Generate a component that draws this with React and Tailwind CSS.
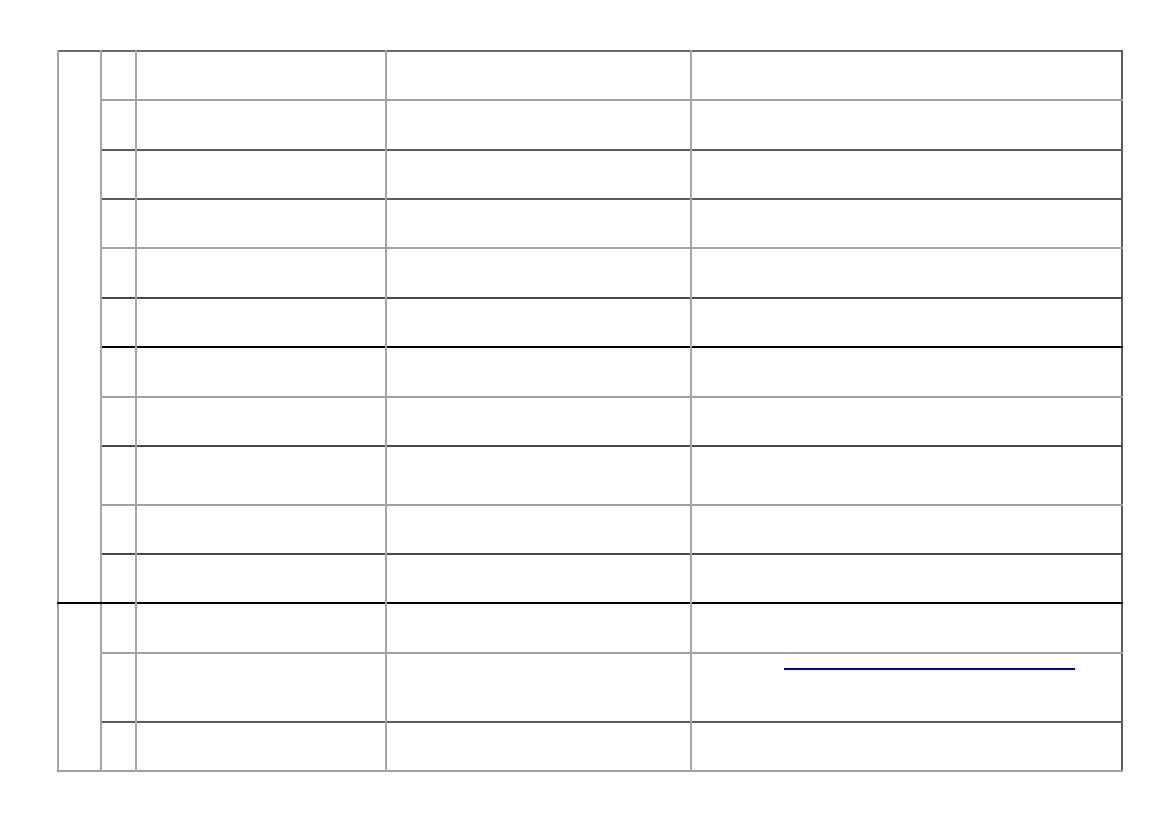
import React from "react";

// row heights and the colour of the line under each row
const rows = [
  { h: "h-[49px]", line: "border-b-[#a0a0a0]" },
  { h: "h-[50px]", line: "border-b-[#5a5a5a]" },
  { h: "h-[49px]", line: "border-b-[#5a5a5a]" },
  { h: "h-[49px]", line: "border-b-[#a0a0a0]" },
  { h: "h-[50px]", line: "border-b-[#4a4a4a]" },
  { h: "h-[49px]", line: "border-b-[#000000]" },
  { h: "h-[50px]", line: "border-b-[#a0a0a0]" },
  { h: "h-[49px]", line: "border-b-[#4a4a4a]" },
  { h: "h-[59px]", line: "border-b-[#a0a0a0]" },
  { h: "h-[49px]", line: "border-b-[#4a4a4a]" },
  { h: "h-[49px]", line: "border-b-[#000000]" },
  { h: "h-[50px]", line: "border-b-[#a0a0a0]" },
  { h: "h-[69px]", line: "border-b-[#5a5a5a]", link: true },
  { h: "h-[49px]", line: "border-b-[#a0a0a0]" },
];

const cell = "border-l-2 border-l-[#a6a6a6] p-0 align-top";

const App = () => {
  return (
    <div className="min-h-screen bg-white pt-[50px] pl-[57px] font-['Liberation_Sans',sans-serif]">
      <table className="table-fixed border-collapse w-[1066px] border-t-2 border-t-[#6a6a6a] border-r-2 border-r-[#5a5a5a]">
        <colgroup>
          <col className="w-[43px]" />
          <col className="w-[35px]" />
          <col className="w-[250px]" />
          <col className="w-[305px]" />
          <col />
        </colgroup>
        <tbody>
          {rows.map((r, i) => (
            <tr key={i} className={`${r.h} border-b-2 ${r.line}`}>
              {i === 0 && <td rowSpan={11} className={`${cell} border-b-2 border-b-[#000000]`}></td>}
              {i === 11 && <td rowSpan={3} className={`${cell} border-b-2 border-b-[#a0a0a0]`}></td>}
              <td className={cell}></td>
              <td className={cell}></td>
              <td className={cell}></td>
              <td className={cell}>
                {r.link && (
                  <a className="ml-[92px] mt-[14px] block w-[291px] h-[2px] bg-[#0000b8]" href="#"></a>
                )}
              </td>
            </tr>
          ))}
        </tbody>
      </table>
    </div>
  );
};

export default App;
